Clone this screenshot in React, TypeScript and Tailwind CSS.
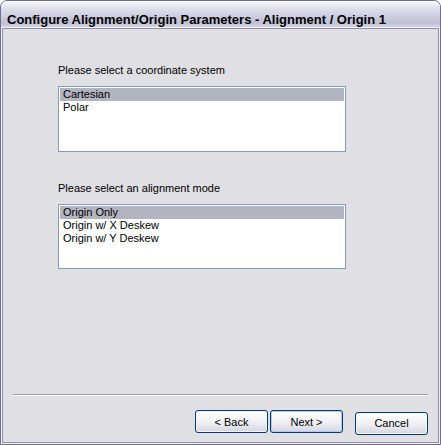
import React from 'react';

const ui = { fontFamily: '"Liberation Sans", Arial, sans-serif' };

function ListBox({ items, height }: { items: string[]; height: string }) {
  return (
    <div className={`w-[288px] ${height} border border-[#7f9db9] bg-white p-[1px]`}>
      {items.map((item, i) => (
        <div
          key={item}
          className={`h-[13px] pl-[3px] text-[11px] leading-[13px] text-black ${i === 0 ? 'bg-[#b2b4bf]' : ''}`}
        >
          {item}
        </div>
      ))}
    </div>
  );
}

function XpButton({ label, isDefault }: { label: string; isDefault?: boolean }) {
  return (
    <button
      className={`h-[23px] w-[73px] rounded-[3px] border border-[#003c74] bg-gradient-to-b from-white via-[#f1f1f5] to-[#d5d5e0] text-[11px] text-black ${
        isDefault ? 'shadow-[inset_0_0_0_1px_#b4c8f2]' : 'shadow-[inset_0_0_0_1px_#f4f4f8]'
      }`}
    >
      {label}
    </button>
  );
}

export default function App() {
  return (
    <div className="w-[441px] h-[445px] bg-white" style={ui}>
      <div className="flex h-full flex-col rounded-t-[7px] border border-[#6f6e8f] bg-[#e0dfe3]">
        {/* title bar */}
        <div className="h-[26px] flex-none rounded-t-[6px] bg-[linear-gradient(to_bottom,#fbfbfd_0%,#e6e6ef_20%,#cfcfe0_55%,#c0c0d6_85%,#d4d4e2_100%)] pl-[6px] pt-[6px]">
          <span className="text-[13px] font-bold leading-[15px] text-black">
            Configure Alignment/Origin Parameters - Alignment / Origin 1
          </span>
        </div>

        {/* body with frame */}
        <div className="flex flex-1 flex-col border border-[#f3f3f7]">
          <div className="flex flex-1 flex-col border border-[#8e8daa] bg-[#e0dfe3]">
            <div className="pl-[55px] pt-[35px]">
              <p className="text-[11px] leading-[13px] text-black">Please select a coordinate system</p>
              <div className="mt-[9px]">
                <ListBox items={['Cartesian', 'Polar']} height="h-[66px]" />
              </div>

              <p className="mt-[30px] text-[11px] leading-[13px] text-black">Please select an alignment mode</p>
              <div className="mt-[9px]">
                <ListBox items={['Origin Only', 'Origin w/ X Deskew', 'Origin w/ Y Deskew']} height="h-[65px]" />
              </div>
            </div>

            <div className="mt-auto px-[10px]">
              <div className="border-t border-[#a0a0a8] border-b border-b-white" />
              <div className="flex justify-end pr-[0px] pt-[14px] pb-[7px]">
                <div className="flex gap-[2px]">
                  <XpButton label="< Back" />
                  <XpButton label="Next >" isDefault />
                </div>
                <div className="ml-[12px]">
                  <XpButton label="Cancel" />
                </div>
              </div>
            </div>
          </div>
        </div>
      </div>
    </div>
  );
}
